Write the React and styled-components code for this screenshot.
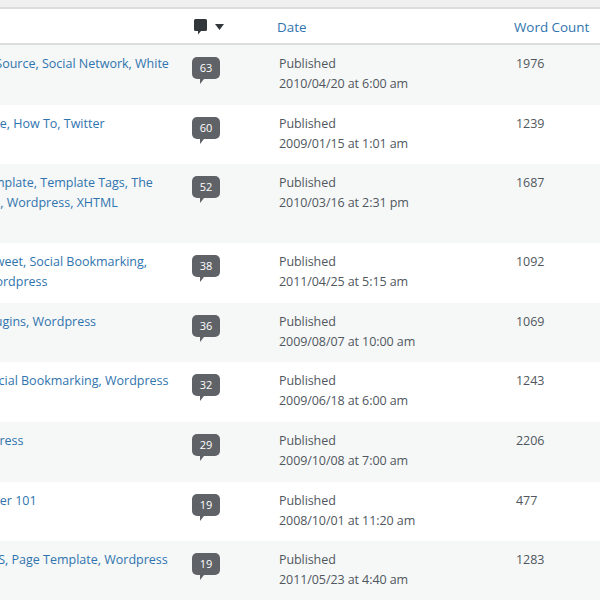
import styled, { createGlobalStyle } from 'styled-components'

const GlobalStyle = createGlobalStyle`
  html, body {
    margin: 0;
    padding: 0;
    background: #f0f0f1;
  }
  body {
    font-family: "Open Sans", "Noto Sans", sans-serif;
    font-size: 12.5px;
    letter-spacing: -0.08px;
    color: #50575e;
    overflow: hidden;
  }
`

const Viewport = styled.div`
  width: 600px;
  height: 600px;
  overflow: hidden;
  padding-top: 7px;
  box-sizing: border-box;
`

const Table = styled.div`
  width: 680px;
  margin-left: -40px;
  background: #fff;
  border-top: 2px solid #dcdcde;
`

const Columns = styled.div`
  display: grid;
  grid-template-columns: 232px 87px 235px 126px;
`

const Head = styled(Columns)`
  height: 36px;
  box-sizing: border-box;
  padding-top: 2px;
  align-items: center;
  border-bottom: 2px solid #dcdcde;
`

const HeadLink = styled.a`
  color: #2f74ae;
  font-size: 13.4px;
  letter-spacing: 0;
  margin-left: ${(p) => p.$inset || 0}px;
`

const CommentSort = styled.div`
  display: flex;
  align-items: center;
  gap: 8px;
  padding-left: 2px;
`

const Row = styled(Columns)`
  height: ${(p) => (p.$tall ? 79 : 59.6)}px;
  padding-top: 9px;
  box-sizing: border-box;
  background: ${(p) => (p.$even ? '#fff' : '#f6f7f7')};
  line-height: 20px;
`

const Tags = styled.div`
  color: #2f74ae;
  letter-spacing: 0;
  padding-right: 20px;
`

const Bubble = styled.span`
  position: relative;
  display: block;
  width: 28px;
  height: 22px;
  margin-top: 3px;
  border-radius: 5px;
  background: #5f6368;
  color: #fff;
  font-size: 11px;
  line-height: 22px;
  text-align: center;

  &::after {
    content: '';
    position: absolute;
    left: 8px;
    bottom: -5px;
    border-left: 4px solid #5f6368;
    border-bottom: 5px solid transparent;
    border-right: 3px solid transparent;
  }
`

const Count = styled.div`
  padding-left: 2px;
`

const rows = [
  { tags: 'Open Source, Social Network, White', count: 63, date: '2010/04/20 at 6:00 am', words: 1976 },
  { tags: 'Chrome, How To, Twitter', count: 60, date: '2009/01/15 at 1:01 am', words: 1239 },
  { tags: 'UI, Template, Template Tags, The Theme, Wordpress, XHTML', count: 52, date: '2010/03/16 at 2:31 pm', words: 1687, tall: true },
  { tags: 'RSS, Tweet, Social Bookmarking, Art,\u00a0Wordpress', count: 38, date: '2011/04/25 at 5:15 am', words: 1092 },
  { tags: 'Tip, Plugins, Wordpress', count: 36, date: '2009/08/07 at 10:00 am', words: 1069 },
  { tags: 'Tip, Social Bookmarking, Wordpress', count: 32, date: '2009/06/18 at 6:00 am', words: 1243 },
  { tags: 'Wordpress', count: 29, date: '2009/10/08 at 7:00 am', words: 2206 },
  { tags: 'A Twitter 101', count: 19, date: '2008/10/01 at 11:20 am', words: 477 },
  { tags: 'UI, CMS, Page Template, Wordpress', count: 19, date: '2011/05/23 at 4:40 am', words: 1283 },
]

export default function App() {
  return (
    <Viewport>
      <GlobalStyle />
      <Table>
        <Head>
          <span />
          <CommentSort>
            <svg width="13" height="16" viewBox="0 0 13 16">
              <path d="M1.500 0h10A1.500 1.500 0 0 1 13 1.500v9a1.500 1.500 0 0 1-1.500 1.500H7l-3 3.500V12H1.500A1.500 1.500 0 0 1 0 10.500v-9A1.500 1.500 0 0 1 1.500 0z" fill="#32373c" />
            </svg>
            <svg width="9" height="6" viewBox="0 0 9 6">
              <path d="M0 0h9L4.500 6z" fill="#32373c" />
            </svg>
          </CommentSort>
          <HeadLink $inset={-2}>Date</HeadLink>
          <HeadLink>Word Count</HeadLink>
        </Head>
        {rows.map((row, i) => (
          <Row key={i} $even={i % 2 === 1} $tall={row.tall}>
            <Tags>{row.tags}</Tags>
            <div>
              <Bubble>{row.count}</Bubble>
            </div>
            <div>
              Published
              <br />
              {row.date}
            </div>
            <Count>{row.words}</Count>
          </Row>
        ))}
      </Table>
    </Viewport>
  )
}
